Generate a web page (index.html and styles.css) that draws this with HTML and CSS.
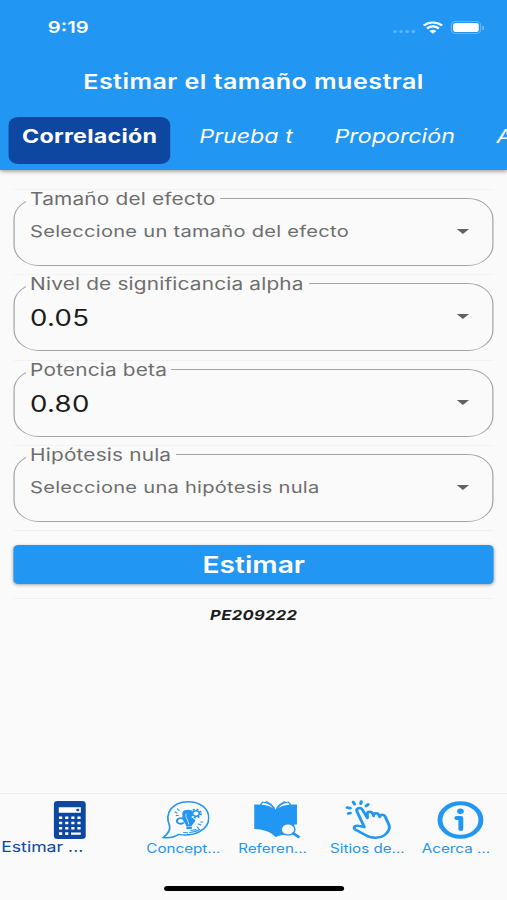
FILE: index.html
```html
<!DOCTYPE html>
<html lang="es">
<head>
    <meta charset="UTF-8">
    <meta name="viewport" content="width=device-width, initial-scale=1.0">
    <title>Estimar el tamaño muestral</title>
    <link rel="stylesheet" href="styles.css">
</head>
<body>
    <div class="screen">

        <header class="header">
            <div class="status">
                <span class="time">9:19</span>
                <div class="status-icons">
                    <span class="signal"><i></i><i></i><i></i><i></i></span>
                    <svg class="wifi" viewBox="0 0 17 13" width="17" height="13">
                        <path d="M1 4.6a10.6 10.6 0 0 1 15 0M3.7 7.4a6.8 6.8 0 0 1 9.6 0" fill="none" stroke="#fff" stroke-width="2.1"/>
                        <path d="M5.7 10a4 4 0 0 1 5.6 0L8.5 12.8z" fill="#fff"/>
                    </svg>
                    <span class="battery"><i></i></span>
                </div>
            </div>
            <h1>Estimar el tamaño muestral</h1>
            <nav class="tabs">
                <a class="tab active">Correlación</a>
                <a class="tab">Prueba t</a>
                <a class="tab">Proporción</a>
                <a class="tab">A</a>
            </nav>
        </header>

        <main>
            <div class="row">
                <fieldset class="field">
                    <legend>Tamaño del efecto</legend>
                    <span class="hint">Seleccione un tamaño del efecto</span>
                    <i class="arrow"></i>
                </fieldset>
            </div>
            <div class="row">
                <fieldset class="field">
                    <legend>Nivel de significancia alpha</legend>
                    <span class="value">0.05</span>
                    <i class="arrow"></i>
                </fieldset>
            </div>
            <div class="row">
                <fieldset class="field">
                    <legend>Potencia beta</legend>
                    <span class="value">0.80</span>
                    <i class="arrow"></i>
                </fieldset>
            </div>
            <div class="row">
                <fieldset class="field">
                    <legend>Hipótesis nula</legend>
                    <span class="hint">Seleccione una hipótesis nula</span>
                    <i class="arrow"></i>
                </fieldset>
            </div>
            <div class="action">
                <button type="button">Estimar</button>
            </div>
            <p class="code">PE209222</p>
        </main>

        <nav class="bottom-nav">
            <a class="item selected">
                <svg viewBox="0 0 40 40" width="40" height="40">
                    <rect x="7" y="1" width="26" height="38" rx="3" fill="#0d47a1"/>
                    <path d="M11 7.3h18v5.5H11z" fill="#fff"/>
                    <circle cx="26.5" cy="10" r="1.3" fill="#0d47a1"/>
                    <path d="M12.5 16.4v18.5M17.5 16.4v18.5M22.5 16.4v13.5M27.5 16.4v13.5" stroke="#fff" stroke-width="2.6" stroke-dasharray="2.6 2.7"/>
                    <path d="M21 33.6h8" stroke="#fff" stroke-width="2.4"/>
                </svg>
                <span>Estimar ...</span>
            </a>
            <a class="item">
                <svg viewBox="0 0 40 40" width="40" height="40" fill="none" stroke="#2196f3" stroke-width="1.4" stroke-linecap="round">
                    <path d="M7.5 26C3 13 10 1.7 22.5 1.7c10 0 17 7 17 16.3C39.5 29 28.5 37 15 34.4 11.5 37 7 38.3 2.3 37.6 6 34 8.2 30 7.5 26z"/>
                    <path d="M18.5 15c-1-4 3-6 7-4l1 3-2 3c1 1.500 2.5 2 3.5 3.5-.5 2-2.5 3-3 5.5h-3.5c0-3-4-5-3-11z" fill="#2196f3" stroke-width="1"/>
                    <path d="M22 28h3" stroke-width="2"/>
                    <path d="M21 14c-1 4 2 6 2 10" stroke="#fafafa" stroke-width=".7"/>
                    <circle cx="29" cy="13.5" r="4" stroke-width="1.8" stroke-dasharray="1.6 1.54" stroke-linecap="butt"/>
                    <circle cx="29" cy="13.5" r="2.8" fill="#fafafa" stroke-width="1.4"/>
                    <path d="M18 18.5c-2-1-4.5 0-4.5 2.5s3 3.5 5 2" stroke-width="1.8"/>
                    <path d="M12 12l1.5 1M14 9l1.3 1.5M13 15.5h1.5M31 24l2 1M30 27l1.3 1.5M33 22h1.5" stroke-width="1"/>
                    <path d="M19 32.5l3 .3M24 32.5c4-.3 6-1.5 8-3M25 30.5l4-1" stroke-width="1.1"/>
                </svg>
                <span>Concept...</span>
            </a>
            <a class="item">
                <svg viewBox="0 0 40 40" width="40" height="40">
                    <path d="M1.6 4.5C9 4.5 15 6 19 11.7 23 6 29 4.5 36.5 4.5V29c-7 .5-13 2-17.500 8-4.5-6-10.5-7.5-17.4-8z" fill="#2196f3"/>
                    <path d="M6.5 5.2L8.5 2c5 .8 9 4 10.5 9.5C16.5 7.5 12 5.7 6.5 5.2zM31.5 5.2L29.5 2c-5 .8-9 4-10.5 9.5 2.5-4 7-5.800 12.5-6.300z" fill="#fafafa" stroke="#2196f3" stroke-width="1.2" stroke-linejoin="round"/>
                    <path d="M10 3l1.8-1.2c2.7 1.7 4.7 3.7 6 6.2M28 3l-1.8-1.2c-2.7 1.7-4.7 3.7-6 6.2" fill="none" stroke="#2196f3" stroke-width="1.2"/>
                    <path d="M34.5 24.5h3V34l-6 2z" fill="#fafafa"/>
                    <path d="M19 37c5-2.5 10-2.5 13-3v-9H19z" fill="#2196f3"/>
                    <circle cx="29.2" cy="29.5" r="6.2" fill="#2196f3"/>
                    <circle cx="29.2" cy="29.5" r="5" fill="#fafafa"/>
                    <path d="M32.8 32.8l5.7 4.7" stroke="#2196f3" stroke-width="2.5"/>
                </svg>
                <span>Referen...</span>
            </a>
            <a class="item">
                <svg viewBox="0 0 40 40" width="40" height="40" fill="none" stroke="#2196f3" stroke-width="2.4" stroke-linecap="round" stroke-linejoin="round">
                    <path d="M16.5 27L10.5 11.5c-1-3.5 3-4.5 4.3-2L19 18v-4c0-3 3.5-3 4.5 0l.6 2c0-3.5 3.5-3.5 4.5-.5l.6 1.5c.3-3 3.3-3 4.5 0l3 8c1 4-.5 7-3.5 10-4 4-12 3-15 .5L9 29.5c-2-2.5.5-4.5 3-3.7z"/>
                    <path d="M3.5 13.5L5 13M2.5 7.5l2.5.7M7.5 2l1 2.2M14 1.5l-.4 2.2M19.5 4.5L18 6" stroke-width="2.6"/>
                </svg>
                <span>Sitios de...</span>
            </a>
            <a class="item">
                <svg viewBox="0 0 40 40" width="40" height="40">
                    <circle cx="20" cy="20" r="16.7" fill="none" stroke="#2196f3" stroke-width="4"/>
                    <circle cx="20" cy="11.3" r="2.7" fill="#2196f3"/>
                    <path d="M17 18H20.3V29" fill="none" stroke="#2196f3" stroke-width="4" stroke-linecap="round" stroke-linejoin="round"/>
                </svg>
                <span>Acerca ...</span>
            </a>
        </nav>
        <div class="home-bar"></div>
    </div>
</body>
</html>
```
FILE: styles.css
```css
* {
    box-sizing: border-box;
}

body {
    margin: 0;
    overflow: hidden;
    background-color: #fafafa;
}

.screen {
    width: 414px;
    height: 900px;
    display: flex;
    flex-direction: column;
    overflow: hidden;
    transform: scaleX(1.2246);
    transform-origin: 0 0;
    font-family: Inter, sans-serif;
    background-color: #fafafa;
}

.header {
    height: 170px;
    flex-shrink: 0;
    background-color: #2196f3;
    color: white;
    box-shadow: 0 1px 4px rgba(0, 0, 0, 0.45);
}

.status {
    height: 54px;
    padding: 0 21.5px 0 39px;
    display: flex;
    align-items: center;
    justify-content: space-between;
}

.time {
    font-size: 16.5px;
    font-weight: 600;
}

.status-icons {
    display: flex;
    align-items: center;
    gap: 6px;
}

.signal {
    display: flex;
    gap: 2px;
    padding-top: 9px;
}

.signal i {
    width: 3px;
    height: 3px;
    border-radius: 50%;
    background-color: rgba(255, 255, 255, 0.3);
}

.battery {
    position: relative;
    width: 25px;
    height: 13px;
    padding: 2px;
    border: 1px solid rgba(255, 255, 255, 0.3);
    border-radius: 4px;
}

.battery::after {
    content: "";
    position: absolute;
    top: 4px;
    right: -3px;
    width: 1px;
    height: 4px;
    background-color: rgba(255, 255, 255, 0.5);
}

.battery i {
    display: block;
    height: 9px;
    margin: -1px;
    border-radius: 2px;
    background-color: white;
}

h1 {
    margin: 0;
    height: 54px;
    line-height: 55px;
    text-align: center;
    font-size: 20.5px;
    font-weight: 600;
    letter-spacing: 0.36px;
}

.tabs {
    display: flex;
    padding: 9px 0 0 7.3px;
    white-space: nowrap;
}

.tab {
    height: 47px;
    padding: 0 17px;
    line-height: 39px;
    font-size: 19px;
    font-style: italic;
}

.tab.active {
    margin-right: 6.4px;
    padding: 0 11px 0 10.7px;
    border-radius: 8px;
    background-color: #0d47a1;
    font-style: normal;
    font-weight: 700;
    letter-spacing: 0.2px;
}

main {
    flex: 1;
    padding: 19px 10.7px 0 11.1px;
}

.row {
    height: 85.25px;
    border-top: 1px solid #f3f3f3;
}

.field {
    display: flex;
    justify-content: space-between;
    height: 78px;
    margin: -2px 0 0;
    padding: 0 19px 0 12.5px;
    border: 1px solid #a4a4a4;
    border-radius: 21px;
    color: #6e6e6e;
}

legend {
    height: 21px;
    margin-left: -4px;
    padding: 0 4px;
    line-height: 22px;
    font-size: 17px;
    letter-spacing: 0.14px;
}

.hint {
    line-height: 44px;
    font-size: 16.4px;
    letter-spacing: 0.22px;
}

.value {
    line-height: 48px;
    font-size: 22.5px;
    letter-spacing: 0.2px;
    color: #1c1c1c;
}

.arrow {
    margin-top: 20px;
    height: 0;
    border: 5.5px solid transparent;
    border-top-color: #616161;
    border-bottom: 0;
}

.action {
    padding: 14px 0;
    border-top: 1px solid #efefef;
    border-bottom: 1px solid #efefef;
}

button {
    display: block;
    width: 100%;
    height: 39px;
    padding: 1px 0 0;
    border: none;
    border-radius: 4px;
    background-color: #2196f3;
    color: white;
    font-family: inherit;
    font-size: 23px;
    font-weight: 600;
    box-shadow: 0 1px 3px rgba(0, 0, 0, 0.35);
}

.code {
    margin: 6px 0 0;
    text-align: center;
    font-size: 13.5px;
    font-style: italic;
    font-weight: 700;
    line-height: 20px;
    letter-spacing: 0.3px;
    color: #1c1c1c;
}

.bottom-nav {
    display: flex;
    height: 93px;
    padding-top: 6px;
    border-top: 1px solid #eeeeee;
}

.item {
    width: 75px;
    color: #2196f3;
    white-space: nowrap;
}

.item svg {
    display: block;
    margin: 0 0 0 16.8px;
}

.item span {
    display: block;
    margin-left: 5.5px;
    font-size: 12.4px;
    line-height: 17px;
}

.item.selected {
    width: 114px;
    color: #0d47a1;
}

.item.selected svg {
    margin-left: 37px;
}

.item.selected span {
    margin-left: 1px;
    font-size: 14.4px;
    line-height: 14px;
}

.home-bar {
    width: 147px;
    height: 5px;
    margin: 0 auto 9px;
    border-radius: 3px;
    background-color: black;
}
```
